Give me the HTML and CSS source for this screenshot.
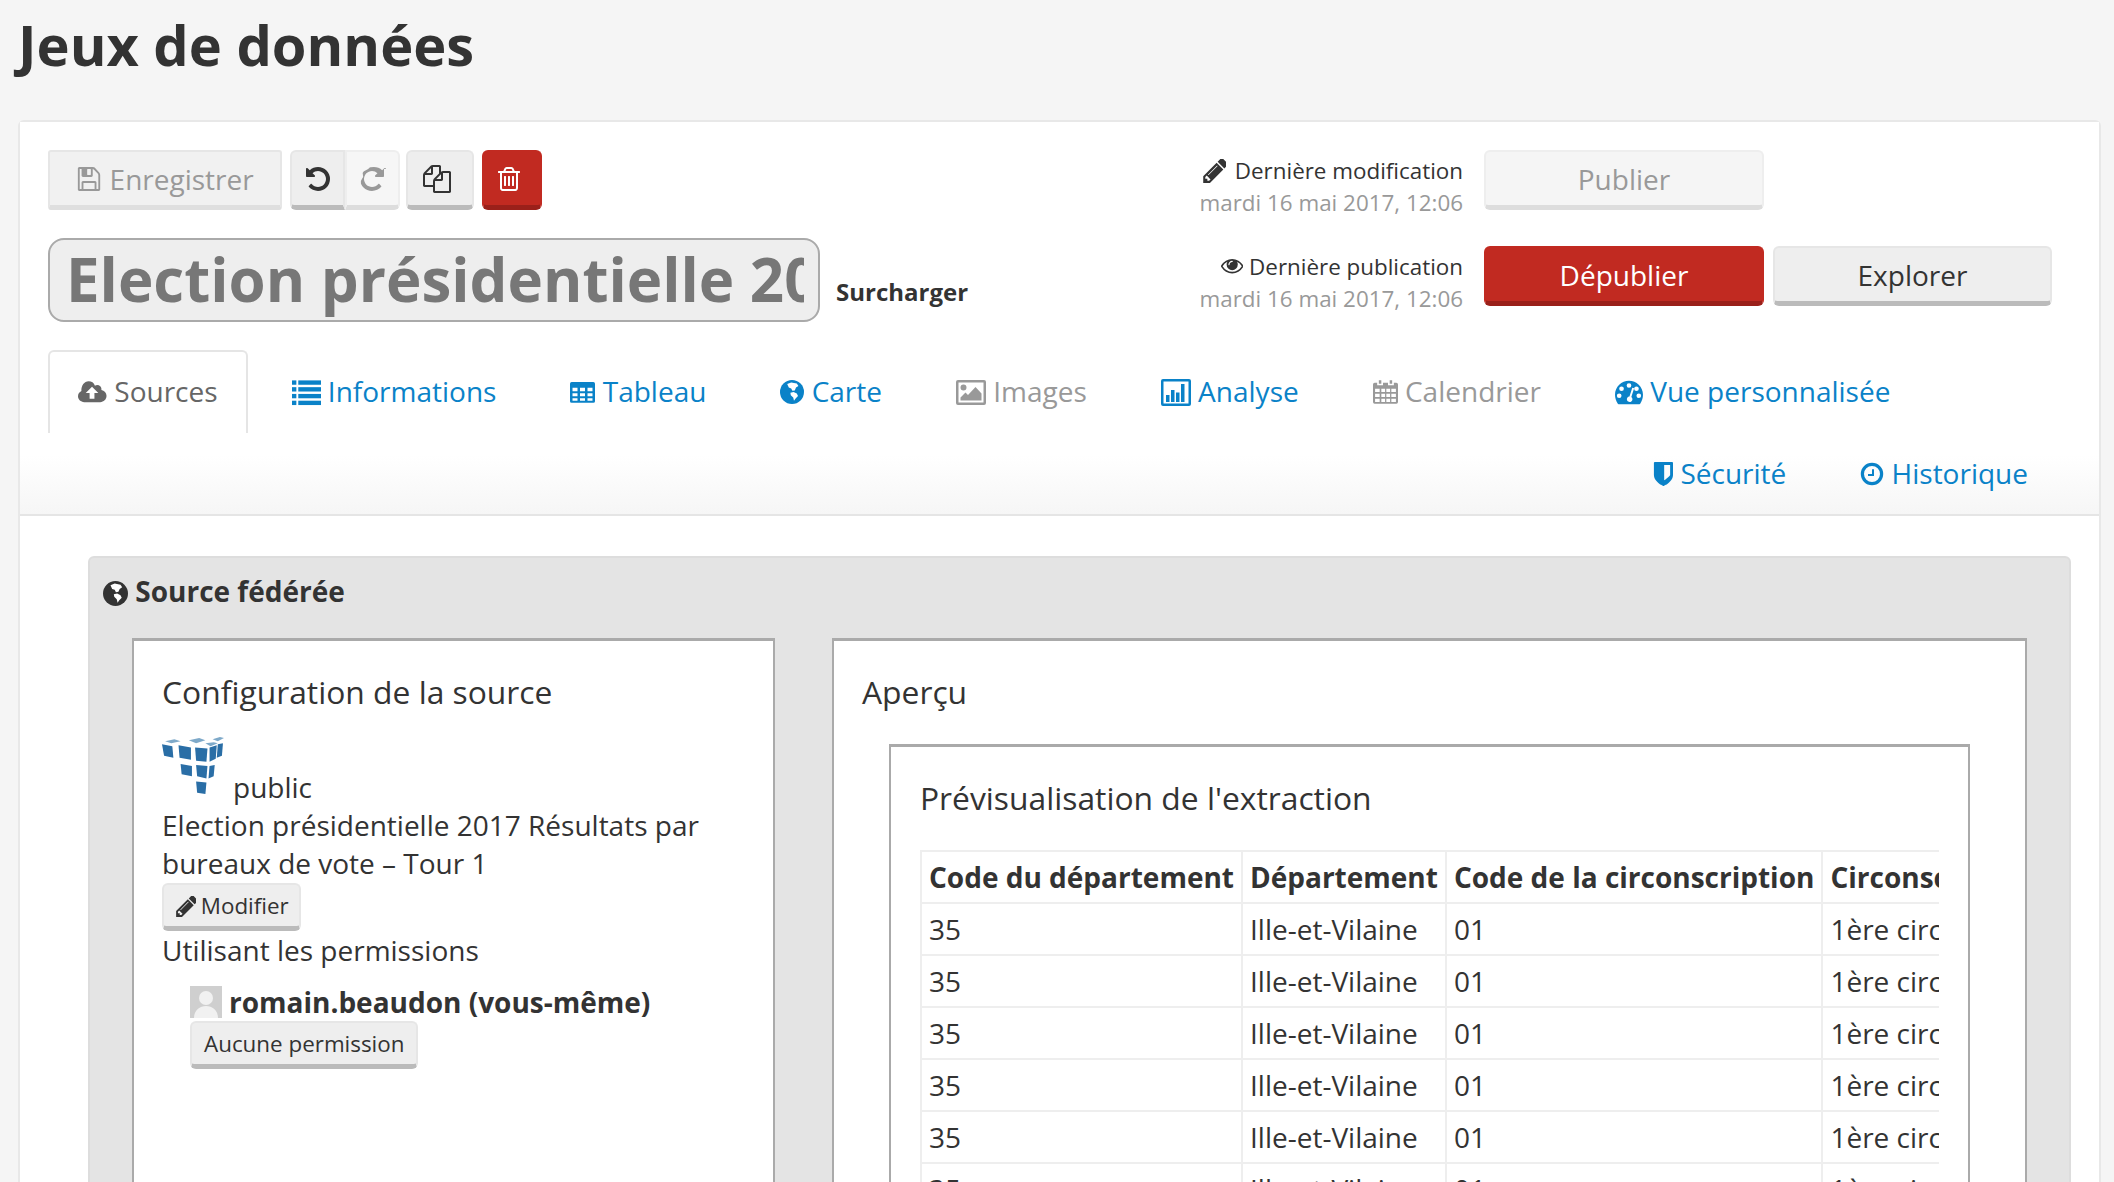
FILE: index.html
```html
<!DOCTYPE html>
<html lang="fr">

<head>
    <meta charset="UTF-8">
    <title>Jeux de données</title>
    <link rel="stylesheet" href="styles.css">
</head>

<body>
    <svg class="sprite" xmlns="http://www.w3.org/2000/svg">
        <symbol id="i-save" viewBox="0 0 1792 1792"><path transform="translate(128 0) scale(.93 1)" d="M512 1536h768v-384h-768v384zm896 0h128v-896q0-14-10-38.500t-20-34.500l-281-281q-10-10-34-20t-39-10v416q0 40-28 68t-68 28h-576q-40 0-68-28t-28-68v-416h-128v1280h128v-416q0-40 28-68t68-28h832q40 0 68 28t28 68v416zm-384-928v-320q0-13-9.500-22.500t-22.500-9.500h-192q-13 0-22.500 9.500t-9.500 22.500v320q0 13 9.500 22.500t22.500 9.500h192q13 0 22.500-9.500t9.500-22.500zm640 32v928q0 40-28 68t-68 28h-1344q-40 0-68-28t-28-68v-1344q0-40 28-68t68-28h928q40 0 88 20t76 48l280 280q28 28 48 76t20 88z"/></symbol>
        <symbol id="i-undo" viewBox="0 0 1792 1792"><path d="M1664 896q0 156-61 298t-164 245-245 164-298 61q-172 0-327-72.500t-264-204.500q-7-10-6.500-22.500t8.500-20.500l137-138q10-9 25-9 16 2 23 12 73 95 179 147t225 52q104 0 198.500-40.500t163.500-109.500 109.500-163.500 40.500-198.500-40.500-198.500-109.500-163.500-163.500-109.500-198.500-40.500q-98 0-188 35.500t-160 101.500l137 138q31 30 14 69-17 40-59 40h-448q-26 0-45-19t-19-45v-448q0-42 40-59 39-17 69 14l130 129q107-101 244.500-156.500t284.500-55.500q156 0 298 61t245 164 164 245 61 298z"/></symbol>
        <symbol id="i-redo" viewBox="0 0 1792 1792"><path d="M1664 256v448q0 26-19 45t-45 19h-448q-42 0-59-40-17-39 14-69l138-138q-148-137-349-137-104 0-198.500 40.500t-163.500 109.500-109.500 163.500-40.500 198.500 40.500 198.500 109.500 163.500 163.500 109.500 198.500 40.500q119 0 225-52t179-147q7-10 23-12 15 0 25 9l137 138q9 8 9.500 20.500t-7.500 22.500q-109 132-264 204.500t-327 72.500q-156 0-298-61t-245-164-164-245 61-298 61-298 164-245 245-164 298-61q147 0 284.500 55.500t244.500 156.500l130-129q29-31 70-14 39 17 39 59z"/></symbol>
        <symbol id="i-files" viewBox="0 0 1792 1792"><path d="M1696 384q40 0 68 28t28 68v1216q0 40-28 68t-68 28h-960q-40 0-68-28t-28-68v-288h-544q-40 0-68-28t-28-68v-672q0-40 20-88t48-76l408-408q28-28 76-48t88-20h416q40 0 68 28t28 68v328q68-40 128-40h416zm-544 213l-299 299h299v-299zm-640-384l-299 299h299v-299zm196 647l316-316v-416h-384v416q0 40-28 68t-68 28h-416v640h512v-256q0-40 20-88t48-76zm956 804v-1152h-384v416q0 40-28 68t-68 28h-416v640h896z"/></symbol>
        <symbol id="i-trash" viewBox="0 0 1792 1792"><path d="M704 736v576q0 14-9 23t-23 9h-64q-14 0-23-9t-9-23v-576q0-14 9-23t23-9h64q14 0 23 9t9 23zm256 0v576q0 14-9 23t-23 9h-64q-14 0-23-9t-9-23v-576q0-14 9-23t23-9h64q14 0 23 9t9 23zm256 0v576q0 14-9 23t-23 9h-64q-14 0-23-9t-9-23v-576q0-14 9-23t23-9h64q14 0 23 9t9 23zm128 724v-948h-896v948q0 22 7 40.500t14.500 27 10.500 8.500h832q3 0 10.500-8.500t14.500-27 7-40.500zm-672-1076h448l-48-117q-7-9-17-11h-317q-10 2-17 11zm928 32v64q0 14-9 23t-23 9h-96v948q0 83-47 143.500t-113 60.500h-832q-66 0-113-58.500t-47-141.500v-952h-96q-14 0-23-9t-9-23v-64q0-14 9-23t23-9h309l70-167q15-37 54-63t79-26h320q40 0 79 26t54 63l70 167h309q14 0 23 9t9 23z"/></symbol>
        <symbol id="i-pencil" viewBox="128 180 1400 1490"><path d="M491 1536l91-91-235-235-91 91v107h128v128h107zm523-928q0-22-22-22-10 0-17 7l-542 542q-7 7-7 17 0 22 22 22 10 0 17-7l542-542q7-7 7-17zm-54-192l416 416-832 832h-416v-416zm683 96q0 53-37 90l-166 166-416-416 166-165q36-38 90-38 53 0 91 38l235 234q37 39 37 91z"/></symbol>
        <symbol id="i-eye" viewBox="0 0 1792 1792"><path d="M1664 960q-152-236-381-353 61 104 61 225 0 185-131.500 316.500t-316.500 131.500-316.500-131.500-131.500-316.500q0-121 61-225-229 117-381 353 133 205 333.500 326.500t434.500 121.500 434.500-121.500 333.500-326.500zm-720-384q0-20-14-34t-34-14q-125 0-214.500 89.500t-89.500 214.500q0 20 14 34t34 14 34-14 14-34q0-86 61-147t147-61q20 0 34-14t14-34zm848 384q0 34-20 69-140 230-376.500 368.500t-499.500 138.500-499.500-139-376.500-368q-20-35-20-69t20-69q140-229 376.500-368t499.500-139 499.500 139 376.500 368q20 35 20 69z" transform="translate(0 -64)"/></symbol>
        <symbol id="i-cloud" viewBox="0 0 30 30"><path d="M11 4c3 0 5.500 1.500 6.500 4.500 1.500-1 4-1 5.500.5 1 1 1.500 2.500 1.200 4 3 .8 5.300 3 5.300 6 0 4-3 6.500-6.500 6.500H6.500C3 25.500 0 23 0 19.500c0-2.500 1.500-4.500 3.500-5.500C3.200 8.500 6.500 4 11 4z"/><path fill="#fff" d="M14.500 9.500l6.500 6.500h-4v6h-5v-6H8z"/></symbol>
        <symbol id="i-list" viewBox="0 0 30 30"><rect y="3" width="4.500" height="4.500"/><rect x="6.500" y="3" width="23.500" height="4.500"/><rect y="10" width="4.500" height="4.500"/><rect x="6.500" y="10" width="23.500" height="4.500"/><rect y="17" width="4.500" height="4.500"/><rect x="6.500" y="17" width="23.500" height="4.500"/><rect y="24" width="4.500" height="4.500"/><rect x="6.500" y="24" width="23.500" height="4.500"/></symbol>
        <symbol id="i-table" viewBox="0 0 30 30"><path fill-rule="evenodd" d="M2 3h26a2 2 0 0 1 2 2v21a2 2 0 0 1-2 2H2a2 2 0 0 1-2-2V5a2 2 0 0 1 2-2zm1 7v4h6v-4zm9 0v4h6v-4zm9 0v4h6v-4zM3 16.500v3.500h6v-3.500zm9 0v3.500h6v-3.500zm9 0v3.500h6v-3.500zM3 22.500V25.500h6v-3zm9 0v3h6v-3zm9 0v3h6v-3z"/></symbol>
        <symbol id="i-globe" viewBox="0 0 30 30"><circle cx="15" cy="15" r="15"/><path fill="#fff" d="M9 5l5-2 7 1.500 2 3-3 2-1.500 3.500-3 .500-1.500-3-3-1zM13 16l4-1 4 2 1.500 3-3 3-2 3-1-4-3-3z"/></symbol>
        <symbol id="i-picture" viewBox="0 0 30 30"><path fill-rule="evenodd" d="M2 3h26a2 2 0 0 1 2 2v21a2 2 0 0 1-2 2H2a2 2 0 0 1-2-2V5a2 2 0 0 1 2-2zm.500 2.500v20h25v-20zM7.500 7.500a3 3 0 1 1 0 6 3 3 0 0 1 0-6zM4.500 23.500v-3l5-5 2.500 2.500 7.500-8 6 6.500v7z"/></symbol>
        <symbol id="i-chart" viewBox="0 0 30 30"><path fill-rule="evenodd" d="M2 2h26a2 2 0 0 1 2 2v23a2 2 0 0 1-2 2H2a2 2 0 0 1-2-2V4a2 2 0 0 1 2-2zm.500 2.500v22h25v-22z"/><rect x="5" y="18" width="3.500" height="7"/><rect x="10" y="13" width="3.500" height="12"/><rect x="15" y="15.500" width="3.500" height="9.500"/><rect x="20" y="7" width="3.500" height="18"/></symbol>
        <symbol id="i-cal" viewBox="0 0 30 30"><path fill-rule="evenodd" d="M7 1h3v4H7zM20 1h3v4h-3zM2 4h3v3h7V4h6v3h7V4h3a2 2 0 0 1 2 2v21a2 2 0 0 1-2 2H2a2 2 0 0 1-2-2V6a2 2 0 0 1 2-2zm.500 7v4h5.500v-4zm7.500 0v4h4.500v-4zm6 0v4h4.500v-4zm6 0v4h5.500v-4zM2.500 17v4h5.500v-4zm7.500 0v4h4.500v-4zm6 0v4h4.500v-4zm6 0v4h5.500v-4zM2.500 23v4h5.500v-4zm7.500 0v4h4.500v-4zm6 0v4h4.500v-4zm6 0v4h5.500v-4z"/></symbol>
        <symbol id="i-dash" viewBox="0 0 30 30"><path fill-rule="evenodd" d="M15 3c8 0 15 6.500 15 15 0 3.500-1 6.500-3 9.500-.5.500-1 .5-1.500.5H4.500c-.5 0-1 0-1.500-.5-2-3-3-6-3-9.500C0 9.500 7 3 15 3zM15 5.500a2.500 2.500 0 1 0 0 5 2.500 2.500 0 0 0 0-5zM7 9a2.500 2.500 0 1 0 0 5 2.500 2.500 0 0 0 0-5zm16 0a2.500 2.500 0 1 0 0 5 2.500 2.500 0 0 0 0-5zM4.500 16.500a2.500 2.500 0 1 0 0 5 2.500 2.500 0 0 0 0-5zm21 0a2.500 2.500 0 1 0 0 5 2.500 2.500 0 0 0 0-5zM18.500 10.500l-3 9.200a3 3 0 1 0 2 .6l3-9.200z"/></symbol>
        <symbol id="i-shield" viewBox="128 102 1408 1613"><path fill-rule="evenodd" transform="translate(0 -32) scale(1 1.05)" d="M1344 960v-640h-400v980q90-60 165-120 235-184 235-220zm192-768v768q0 86-33.500 170.500t-83 150-118 127.500-126.500 103-121 77.500-89.500 49.500-42.500 20q-12 6-26 6t-26-6q-16-7-42.500-20t-89.500-49.500-121-77.500-126.500-103-118-127.500-83-150-33.500-170.500v-768q0-26 19-45t45-19h1152q26 0 45 19t19 45z"/></symbol>
        <symbol id="i-clock" viewBox="0 0 30 30"><path fill-rule="evenodd" d="M15 1a14 14 0 1 1 0 28 14 14 0 0 1 0-28zm0 4a10 10 0 1 0 0 20 10 10 0 0 0 0-20z"/><path d="M15 9h2.500v8.500H10V15h5z"/></symbol>
    </svg>

    <h1 class="page-title">Jeux de données</h1>

    <div class="card">
        <div class="card-head">
            <div class="head-top">
                <div class="head-left">
                    <div class="toolbar">
                        <button class="btn btn-save" disabled><svg class="ic"><use href="#i-save"/></svg> Enregistrer</button>
                        <div class="btn-group">
                            <button class="btn btn-icon btn-undo"><svg class="ic"><use href="#i-undo"/></svg></button>
                            <button class="btn btn-icon btn-redo"><svg class="ic"><use href="#i-redo"/></svg></button>
                        </div>
                        <button class="btn btn-icon btn-copy"><svg class="ic"><use href="#i-files"/></svg></button>
                        <button class="btn btn-danger btn-icon btn-del"><svg class="ic"><use href="#i-trash"/></svg></button>
                    </div>
                    <div class="title-row">
                        <input class="title-input" type="text" value="Election présidentielle 2017 Résultats par bureaux de vote" disabled>
                        <span class="override">Surcharger</span>
                    </div>
                </div>
                <div class="head-right">
                    <div class="meta">
                        <div class="meta-label"><svg class="ic ic-pencil"><use href="#i-pencil"/></svg> Dernière modification</div>
                        <div class="meta-date">mardi 16 mai 2017, 12:06</div>
                    </div>
                    <button class="btn btn-wide btn-publish" disabled>Publier</button>
                    <span></span>
                    <div class="meta">
                        <div class="meta-label"><svg class="ic"><use href="#i-eye"/></svg> Dernière publication</div>
                        <div class="meta-date">mardi 16 mai 2017, 12:06</div>
                    </div>
                    <button class="btn btn-wide btn-danger">Dépublier</button>
                    <button class="btn btn-wide">Explorer</button>
                </div>
            </div>

            <ul class="tabs">
                <li class="tab active"><svg class="ic w29"><use href="#i-cloud"/></svg> Sources</li>
                <li class="tab"><svg class="ic w29"><use href="#i-list"/></svg> Informations</li>
                <li class="tab"><svg class="ic w25"><use href="#i-table"/></svg> Tableau</li>
                <li class="tab"><svg class="ic w24"><use href="#i-globe"/></svg> Carte</li>
                <li class="tab off"><svg class="ic"><use href="#i-picture"/></svg> Images</li>
                <li class="tab"><svg class="ic"><use href="#i-chart"/></svg> Analyse</li>
                <li class="tab off"><svg class="ic w25"><use href="#i-cal"/></svg> Calendrier</li>
                <li class="tab"><svg class="ic w28"><use href="#i-dash"/></svg> Vue personnalisée</li>
            </ul>
            <ul class="tabs tabs-right">
                <li class="tab"><svg class="ic w21"><use href="#i-shield"/></svg> Sécurité</li>
                <li class="tab"><svg class="ic w24"><use href="#i-clock"/></svg> Historique</li>
            </ul>
        </div>

        <div class="card-body">
            <div class="panel">
                <h4 class="panel-title"><svg class="ic"><use href="#i-globe"/></svg> Source fédérée</h4>
                <div class="panel-cols">
                    <div class="box box-config">
                        <h3>Configuration de la source</h3>
                        <div class="source-line">
                            <svg class="logo" viewBox="0 0 60 56">
                                <g fill="#2a6ea6">
                                    <path d="M0 7l10 2 1 11-9-2z"/><path d="M16 8l12 2v12l-11-2z"/><path d="M32 10l12 1-1 13-10-1z"/><path d="M46 10l7-2-1 13-6 3z"/><path d="M54 7l5-1-1 12-5 2z"/>
                                    <path d="M18 26l11 2v10l-10-2z"/><path d="M33 27l11 1-1 12-9-2z"/><path d="M46 28l5-1-1 11-5 2z"/>
                                    <path d="M33 43l10 1-1 11-8-1z"/>
                                </g>
                                <g fill="#7ea9c9">
                                    <path d="M3 4l9-2 6 2-9 2z"/><path d="M26 3l10-2 6 2-9 3z"/><path d="M42 6l8-1 4 1-7 3z"/><path d="M49 2l7-2 4 1-6 3z"/>
                                </g>
                            </svg>
                            <span>public</span>
                        </div>
                        <div class="source-name">Election présidentielle 2017 Résultats par bureaux de vote – Tour 1</div>
                        <button class="btn btn-small btn-edit"><svg class="ic"><use href="#i-pencil"/></svg> Modifier</button>
                        <div class="perm-label">Utilisant les permissions</div>
                        <div class="perm-user">
                            <div class="user-line">
                                <svg class="avatar" viewBox="0 0 32 32">
                                    <rect width="32" height="32" fill="#cfcfcf"/>
                                    <circle cx="16" cy="12" r="7" fill="#f1f1f1"/>
                                    <path d="M4 32c0-8 6-12 12-12s12 4 12 12z" fill="#f1f1f1"/>
                                </svg>
                                <b>romain.beaudon (vous-même)</b>
                            </div>
                            <button class="btn btn-small">Aucune permission</button>
                        </div>
                    </div>

                    <div class="box box-preview">
                        <h3>Aperçu</h3>
                        <div class="box box-inner">
                            <h3>Prévisualisation de l'extraction</h3>
                            <div class="table-wrap">
                                <table>
                                    <thead>
                                        <tr><th>Code du département</th><th>Département</th><th>Code de la circonscription</th><th>Circonscription</th></tr>
                                    </thead>
                                    <tbody>
                                        <tr><td>35</td><td>Ille-et-Vilaine</td><td>01</td><td>1ère circonscription</td></tr>
                                        <tr><td>35</td><td>Ille-et-Vilaine</td><td>01</td><td>1ère circonscription</td></tr>
                                        <tr><td>35</td><td>Ille-et-Vilaine</td><td>01</td><td>1ère circonscription</td></tr>
                                        <tr><td>35</td><td>Ille-et-Vilaine</td><td>01</td><td>1ère circonscription</td></tr>
                                        <tr><td>35</td><td>Ille-et-Vilaine</td><td>01</td><td>1ère circonscription</td></tr>
                                        <tr><td>35</td><td>Ille-et-Vilaine</td><td>01</td><td>1ère circonscription</td></tr>
                                    </tbody>
                                </table>
                            </div>
                        </div>
                    </div>
                </div>
            </div>
        </div>
    </div>
</body>

</html>
```

FILE: styles.css
```css
* {
    box-sizing: border-box;
}

html,
body {
    height: 1182px;
    overflow: hidden;
}

body {
    margin: 0;
    padding: 0 13px 0 18px;
    background: #f5f5f5;
    color: #333;
    font-family: "Open Sans", "Noto Sans", sans-serif;
    font-size: 28px;
    line-height: 38px;
}

.sprite {
    display: none;
}

.ic {
    width: 1em;
    height: 1em;
    fill: currentColor;
    vertical-align: -0.12em;
}

.page-title {
    margin: 0 0 34px 0;
    height: 86px;
    padding-top: 6px;
    font-size: 56px;
    line-height: 76px;
    font-weight: 700;
    color: #333;
}

.card {
    height: 1200px;
    background: #fff;
    border: 2px solid #e8e8e8;
    border-radius: 6px;
}

.card-head {
    height: 394px;
    padding: 28px 0 0 28px;
    background: linear-gradient(to bottom, #fff 85%, #f6f6f6 100%);
    border-bottom: 2px solid #e5e5e5;
}

.head-top {
    display: flex;
    justify-content: space-between;
}

.toolbar {
    display: flex;
    gap: 8px;
}

.btn {
    height: 60px;
    padding: 1px 12px 0;
    background: #eee;
    border: 2px solid #e6e6e6;
    border-bottom: 5px solid #bbb;
    border-radius: 6px;
    color: #333;
    font-family: inherit;
    font-size: 28px;
    line-height: 48px;
}

.btn[disabled] {
    background: #f5f5f5;
    border-color: #eee;
    border-bottom-color: #ddd;
    color: #999;
}

.btn-save {
    width: 234px;
    padding: 1px 2px 0 0;
    background: #f1f1f1 !important;
    border-color: #e6e6e6 !important;
    border-bottom-color: #dfdfdf !important;
    border-radius: 3px;
    color: #999;
}

.btn-icon {
    width: 68px;
    padding: 1px 0 0;
}

.btn-group {
    display: flex;
}

.btn-undo {
    width: 55px;
    border-radius: 6px 0 0 6px;
}

.btn-redo {
    width: 55px;
    padding-right: 2px;
    background: #f6f6f6;
    border-color: #eee;
    border-bottom-color: #ddd;
    border-radius: 0 6px 6px 0;
    color: #999;
}

.btn-copy {
    margin-left: -2px;
    padding-right: 6px;
}

.btn-del {
    width: 60px;
    padding-right: 6px;
}

.btn-danger {
    background: #c12a21;
    border-color: #c12a21;
    border-bottom-color: #9a201a;
    color: #fff;
}

.title-row {
    display: flex;
    align-items: flex-end;
    gap: 16px;
    margin-top: 28px;
}

.title-input {
    width: 772px;
    height: 84px;
    padding: 0 14px 2px 16px;
    background: #eee;
    border: 2px solid #aaa;
    border-radius: 16px;
    color: #777;
    font-family: inherit;
    font-size: 60px;
    font-weight: 700;
    opacity: 1;
}

.override {
    padding-bottom: 14px;
    font-size: 24px;
    font-weight: 700;
    line-height: 32px;
}

.head-right {
    display: grid;
    grid-template-columns: auto 280px 279px;
    grid-auto-rows: 60px;
    column-gap: 9px;
    row-gap: 36px;
    margin-right: 47px;
}

.meta {
    padding: 5px 12px 0 0;
    text-align: right;
    font-size: 22.4px;
    line-height: 32px;
    white-space: nowrap;
}

.ic-pencil {
    width: 23px;
    height: 24px;
    margin-right: 3px;
    vertical-align: -4px;
}

.meta-label {
    color: #333;
}

.meta-date {
    color: #999;
}

.btn-wide {
    width: 100%;
}

.tabs {
    display: flex;
    gap: 14px;
    margin: 28px 0 0;
    padding: 0;
    list-style: none;
}

.tab {
    height: 83px;
    padding: 20px 28px 0;
    border: 2px solid transparent;
    border-bottom: 0;
    color: #0a82c8;
    font-size: 28px;
    line-height: 38px;
    white-space: nowrap;
}

.tab .ic {
    width: 30px;
    height: 30px;
    vertical-align: -5px;
}

.tab .w29 {
    width: 29px;
}

.tab .w28 {
    width: 28px;
}

.tab .w25 {
    width: 25px;
}

.tab .w24 {
    width: 24px;
}

.tab .w21 {
    width: 21px;
}

.tab.active {
    background: #fff;
    border-color: #e5e5e5;
    border-radius: 6px 6px 0 0;
    color: #666;
}

.tab.off {
    color: #999;
}

.tabs-right {
    justify-content: flex-end;
    margin: 19px 41px 0 0;
}

.tabs-right .tab {
    height: 40px;
    padding-top: 0;
}

.card-body {
    padding: 40px 28px 0 68px;
}

.panel {
    height: 800px;
    background: #e4e4e4;
    border: 2px solid #ddd;
    border-radius: 6px;
    padding: 0 42px 0 42px;
}

.panel-title {
    margin: 14px 0 0 -29px;
    font-size: 28px;
    line-height: 38px;
    font-weight: 700;
}

.panel-title .ic {
    width: 25px;
    height: 25px;
    vertical-align: -4px;
}

.panel-cols {
    display: flex;
    gap: 57px;
    margin-top: 28px;
}

.box {
    height: 800px;
    padding: 0 28px;
    background: #fff;
    border: 2px solid #aaa;
    border-top-width: 3px;
}

.box h3 {
    margin: 0;
    padding-top: 29px;
    font-size: 31.8px;
    line-height: 44px;
    font-weight: 400;
}

.box-config {
    width: 644px;
}

.box-preview {
    width: 1197px;
}

.source-line {
    display: flex;
    align-items: flex-end;
    gap: 9px;
    margin-top: 23px;
    height: 69px;
}

.logo {
    width: 62px;
    height: 60px;
    margin-bottom: 10px;
    filter: blur(0.6px);
}

.source-line span {
    line-height: 38px;
}

.source-name {
    margin-bottom: 1px;
}

.btn-small {
    display: block;
    height: 48px;
    padding: 1px 12px 0;
    font-size: 22.4px;
    line-height: 38px;
}

.btn-small .ic {
    width: 20px;
    height: 21px;
    margin-right: -1px;
    vertical-align: -3px;
}

.btn-edit {
    padding-right: 10px;
}

.perm-user {
    margin: 13px 0 0 28px;
}

.user-line {
    display: flex;
    align-items: center;
    gap: 7px;
    height: 39px;
}

.user-line b {
    font-size: 28px;
}

.avatar {
    width: 32px;
    height: 32px;
}

.box-inner {
    width: 1081px;
    margin: 30px 0 0 27px;
    padding: 0 29px;
}

.box-inner h3 {
    padding-top: 29px;
}

.table-wrap {
    width: 1019px;
    margin-top: 30px;
    overflow: hidden;
}

table {
    border-collapse: collapse;
    white-space: nowrap;
}

th,
td {
    height: 52px;
    padding: 0 7px;
    border: 2px solid #eee;
    text-align: left;
    font-size: 28px;
    line-height: 38px;
}

th {
    font-weight: 700;
}
```
